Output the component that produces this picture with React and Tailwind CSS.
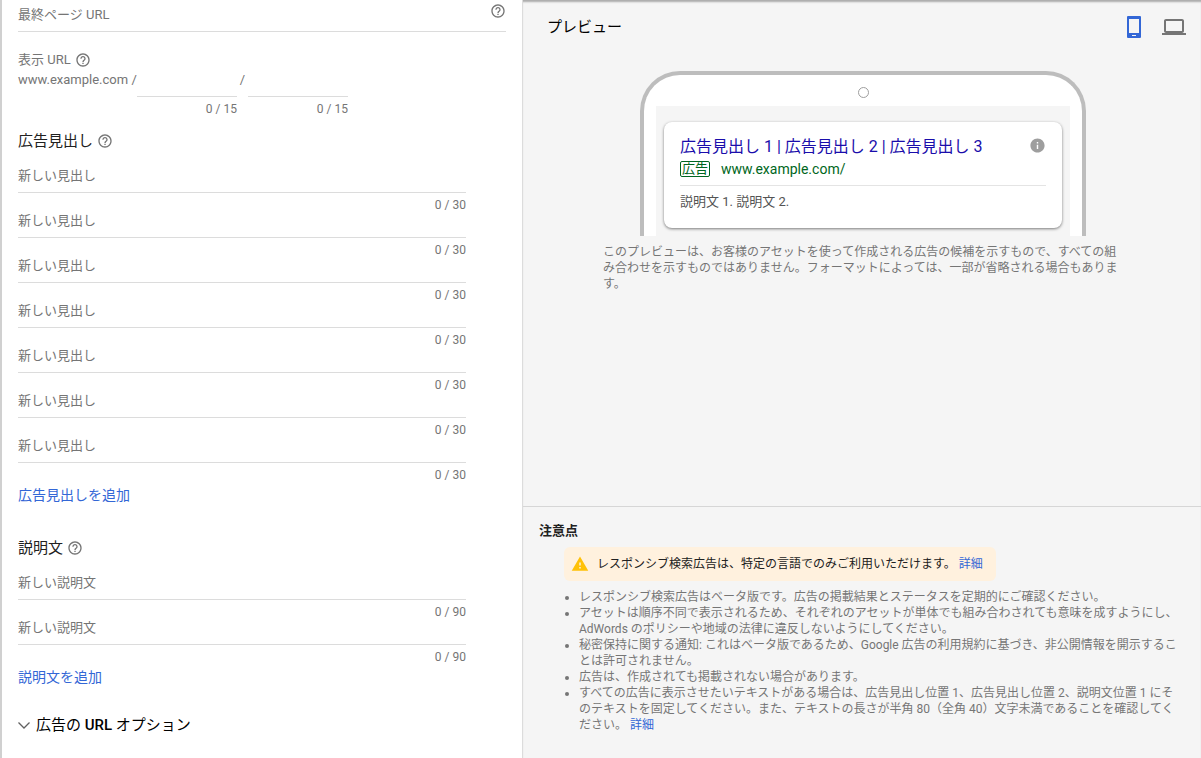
import React, { useState } from 'react';
import { MdHelpOutline, MdInfo, MdLaptop, MdWarning } from 'react-icons/md';

const HEADLINE_COUNT = 7;
const DESCRIPTION_COUNT = 2;

const HelpButton = ({ label }) => (
  <button type="button" aria-label={label} className="shrink-0 text-[#757575]">
    <MdHelpOutline className="block size-4" />
  </button>
);

const AssetInput = ({ placeholder, label, max, value, onChange }) => (
  <div>
    <input
      type="text"
      aria-label={label}
      placeholder={placeholder}
      maxLength={max}
      value={value}
      onChange={(e) => onChange(e.target.value)}
      className="block h-[27px] w-full border-b border-[#dcdcdc] pb-2 text-[13px] text-[#212121] outline-none placeholder:text-[#757575] focus:border-[#3367d6]"
    />
    <p className="pt-[6px] text-right text-xs leading-3 text-[#757575]">
      {value.length} / {max}
    </p>
  </div>
);

const AssetList = ({ placeholder, max, values, setValues }) => (
  <div className="mt-[15px] mr-10 flex flex-col">
    {values.map((value, index) => (
      <AssetInput
        key={index}
        label={`${placeholder} ${index + 1}`}
        placeholder={placeholder}
        max={max}
        value={value}
        onChange={(next) => setValues(values.map((v, i) => (i === index ? next : v)))}
      />
    ))}
  </div>
);

const SectionTitle = ({ children }) => (
  <div className="flex items-center gap-1 text-[15px] leading-5 text-[#212121]">
    <h2>{children}</h2>
    <HelpButton label={`${children}のヘルプ`} />
  </div>
);

const AddButton = ({ children, onClick }) => (
  <button type="button" onClick={onClick} className="mt-1 self-start text-sm leading-5 text-[#3367d6]">
    {children}
  </button>
);

const AdForm = () => {
  const [finalUrl, setFinalUrl] = useState('');
  const [path1, setPath1] = useState('');
  const [path2, setPath2] = useState('');
  const [headlines, setHeadlines] = useState(Array(HEADLINE_COUNT).fill(''));
  const [descriptions, setDescriptions] = useState(Array(DESCRIPTION_COUNT).fill(''));

  return (
    <form className="flex flex-col border-l-2 border-[#d0d0d0] bg-white px-4 pb-6">
      {/* Final URL */}
      <div className="flex items-start border-b border-[#dcdcdc] pt-[3px] pb-[6px]">
        <input
          type="url"
          aria-label="最終ページ URL"
          placeholder="最終ページ URL"
          value={finalUrl}
          onChange={(e) => setFinalUrl(e.target.value)}
          className="h-[22px] min-w-0 flex-1 text-[13px] text-[#212121] outline-none placeholder:text-[#757575]"
        />
        <HelpButton label="最終ページ URL のヘルプ" />
      </div>

      {/* Display URL */}
      <div className="mt-5 flex h-4 items-center gap-1 text-[13px] leading-4 text-[#757575]">
        <span>表示 URL</span>
        <HelpButton label="表示 URL のヘルプ" />
      </div>
      <div className="mt-[2px] flex items-start text-[13px] leading-5 text-[#757575]">
        <span className="w-[119px]">www.example.com /</span>
        <div className="w-[100px]">
          <AssetInput label="パス 1" max={15} value={path1} onChange={setPath1} />
        </div>
        <span className="w-[11px] text-center">/</span>
        <div className="w-[100px]">
          <AssetInput label="パス 2" max={15} value={path2} onChange={setPath2} />
        </div>
      </div>

      <div className="mt-4 flex flex-col">
        <SectionTitle>広告見出し</SectionTitle>
        <AssetList placeholder="新しい見出し" max={30} values={headlines} setValues={setHeadlines} />
        <AddButton onClick={() => setHeadlines([...headlines, ''])}>広告見出しを追加</AddButton>
      </div>

      <div className="mt-[33px] flex flex-col">
        <SectionTitle>説明文</SectionTitle>
        <AssetList placeholder="新しい説明文" max={90} values={descriptions} setValues={setDescriptions} />
        <AddButton onClick={() => setDescriptions([...descriptions, ''])}>説明文を追加</AddButton>
      </div>

      <button type="button" className="mt-7 flex items-center gap-[6px] self-start text-[15px] leading-5 text-black">
        <svg viewBox="0 0 12 7" className="h-[7px] w-3" fill="none" stroke="#616161" strokeWidth="1.3">
          <path d="M0.5 0.5L6 6L11.5 0.5" />
        </svg>
        <span>
          広告の <span className="font-medium">URL</span> オプション
        </span>
      </button>
    </form>
  );
};

const PhonePreview = () => (
  <div className="mx-auto max-w-[446px] rounded-t-[40px] border-4 border-b-0 border-[#bdbdbd] bg-white px-3">
    <div className="flex h-[31px] items-center justify-center pt-[4px]">
      <span className="size-[11px] rounded-full border border-[#9e9e9e]" />
    </div>
    <div className="bg-[#f5f5f5] px-2 pt-4 pb-2">
      <div className="rounded-lg bg-white px-4 pt-[15px] pb-[18px] shadow-[0_1px_3px_rgba(0,0,0,0.5)]">
        <div className="flex items-start justify-between">
          <a href="#ad" className="text-base leading-5 text-[#1a0dab]">
            広告見出し 1 | 広告見出し 2 | 広告見出し 3
          </a>
          <button type="button" aria-label="情報" className="text-[#9e9e9e]">
            <MdInfo className="block size-[17px]" />
          </button>
        </div>
        <div className="mt-1 flex items-center gap-[11px] text-[#006621]">
          <span className="rounded-xs border border-[#006621] px-[1px] text-[13px] leading-[14px]">広告</span>
          <span className="text-sm leading-4">www.example.com/</span>
        </div>
        <p className="mt-2 border-t border-[#e4e4e4] pt-2 text-[13px] leading-4 text-[#545454]">
          説明文 1. 説明文 2.
        </p>
      </div>
    </div>
  </div>
);

const PreviewPanel = () => {
  const [device, setDevice] = useState('mobile');

  return (
    <section className="flex-1 pb-8">
      <div className="flex items-center justify-between pt-[15px] pr-[15px] pl-6">
        <h2 className="text-[15px] leading-6 text-black">プレビュー</h2>
        <div className="flex items-center gap-[21px]">
          <button
            type="button"
            aria-label="モバイル"
            onClick={() => setDevice('mobile')}
            className={device === 'mobile' ? 'text-[#3367d6]' : 'text-[#757575]'}
          >
            <svg viewBox="0 0 14 22" className="block h-[22px] w-[14px]" fill="currentColor" fillRule="evenodd">
              <path d="M1 0H13Q14 0 14 1V21Q14 22 13 22H1Q0 22 0 21V1Q0 0 1 0ZM2 3V17H12V3ZM5 19V20H9V19Z" />
            </svg>
          </button>
          <button
            type="button"
            aria-label="パソコン"
            onClick={() => setDevice('desktop')}
            className={device === 'desktop' ? 'text-[#3367d6]' : 'text-[#757575]'}
          >
            <MdLaptop className="block size-6" />
          </button>
        </div>
      </div>

      <div className="mt-8 pl-[2px]">
        <PhonePreview />
        <p className="mx-auto mt-2 max-w-[520px] text-xs leading-4 text-[#757575]">
          このプレビューは、お客様のアセットを使って作成される広告の候補を示すもので、すべての組み合わせを示すものではありません。フォーマットによっては、一部が省略される場合もあります。
        </p>
      </div>
    </section>
  );
};

const NotesPanel = () => (
  <section className="border-t border-[#d6d6d6] px-4 pt-[14px] pb-[26px]">
    <h3 className="text-[13px] leading-5 font-bold text-[#212121]">注意点</h3>
    <div className="mt-[6px] ml-[25px] flex w-fit items-center gap-2 rounded-md bg-[#fff1de] px-[7px] py-2 text-xs leading-4 text-[#212121]">
      <MdWarning className="size-[18px] shrink-0 text-[#ffc107]" />
      <p className="pr-[6px]">
        レスポンシブ検索広告は、特定の言語でのみご利用いただけます。{' '}
        <a href="#details" className="text-[#3367d6]">詳細</a>
      </p>
    </div>
    <ul className="mt-2 list-disc pl-10 text-xs leading-4 text-[#757575]">
      <li>レスポンシブ検索広告はベータ版です。広告の掲載結果とステータスを定期的にご確認ください。</li>
      <li>
        アセットは順序不同で表示されるため、それぞれのアセットが単体でも組み合わされても意味を成すようにし、AdWords のポリシーや地域の法律に違反しないようにしてください。
      </li>
      <li>
        秘密保持に関する通知: これはベータ版であるため、Google 広告の利用規約に基づき、非公開情報を開示することは許可されません。
      </li>
      <li>広告は、作成されても掲載されない場合があります。</li>
      <li>
        すべての広告に表示させたいテキストがある場合は、広告見出し位置 1、広告見出し位置 2、説明文位置 1 にそのテキストを固定してください。また、テキストの長さが半角 80（全角 40）文字未満であることを確認してください。{' '}
        <a href="#details" className="text-[#3367d6]">詳細</a>
      </li>
    </ul>
  </section>
);

const App = () => {
  return (
    <div
      lang="ja"
      className="grid min-h-screen grid-cols-[minmax(0,522fr)_minmax(0,679fr)] bg-white font-['Roboto','Noto_Sans_CJK_JP',sans-serif]"
    >
      <AdForm />
      <div className="flex flex-col border-l border-[#dcdcdc] bg-[#f5f5f5] shadow-[inset_0_3px_2px_-1px_rgba(0,0,0,0.3)]">
        <PreviewPanel />
        <NotesPanel />
      </div>
    </div>
  );
};

export default App;
